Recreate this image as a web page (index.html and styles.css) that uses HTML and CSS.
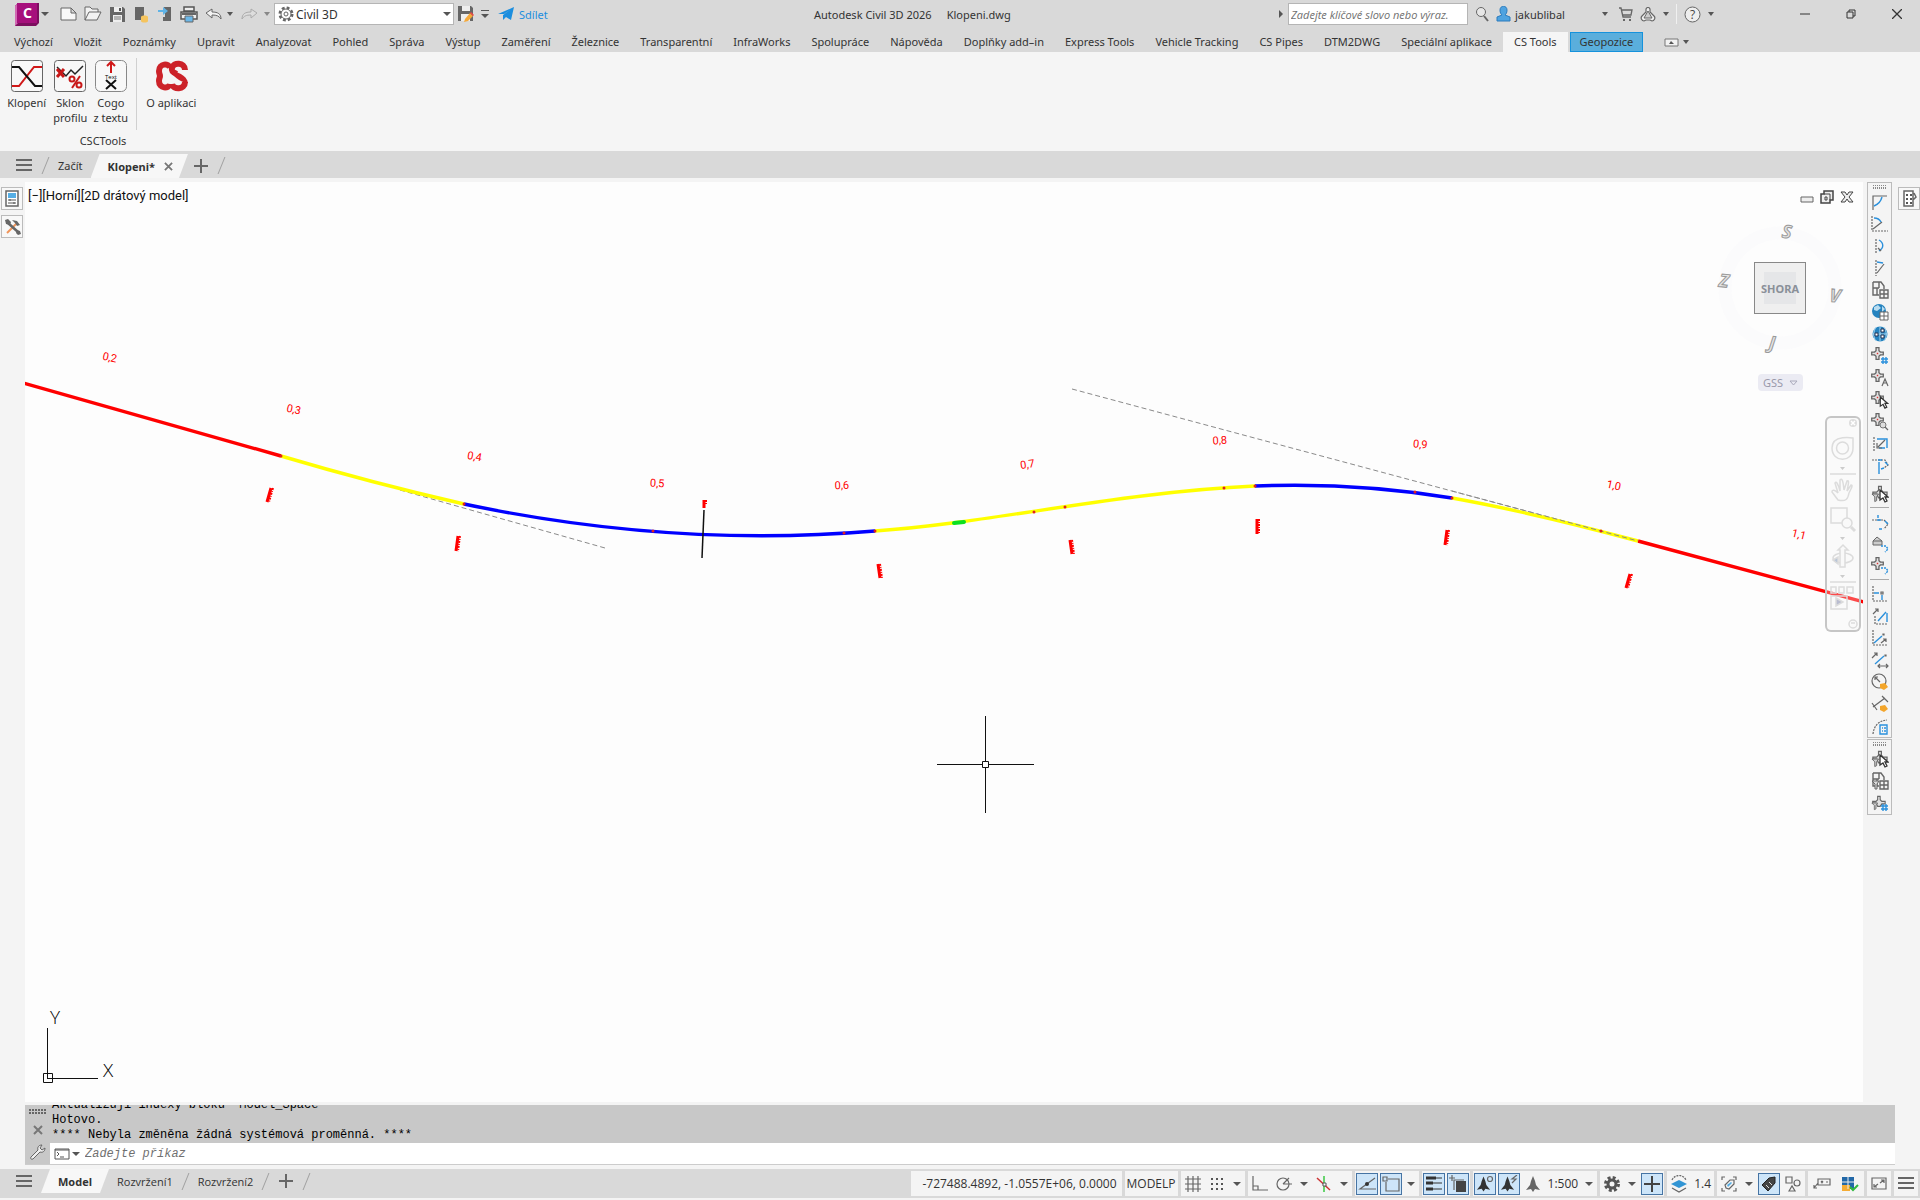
FILE: index.html
```
<!DOCTYPE html>
<html lang="cs">
<head>
    <meta charset="utf-8">
    <title>Autodesk Civil 3D 2026 - Klopeni.dwg</title>
    <link rel="stylesheet" href="styles.css">
</head>
<body>
    <!-- shared icons -->
    <svg class="defs" width="0" height="0">
        <symbol id="point" viewBox="0 0 18 18"><path d="M7 1h4v4l2 2h4v4h-4l-2 2v4H7v-4l-2-2H1V7h4l2-2z" fill="#e2e2e2" stroke="#666" stroke-width="1.8"/><path d="M8 8h2v2H8z" fill="#d33"/></symbol>
        <symbol id="cursor" viewBox="0 0 10 14"><path d="M1 1v10l3-2 2 4 2-1-2-4h3z" fill="#fff" stroke="#333" stroke-width="1.3"/></symbol>
        <symbol id="human" viewBox="0 0 16 18"><path d="M8 1l2 5 1 4 4 5-5-1-2 3-2-3-5 1 4-5 1-4z" fill="currentColor"/></symbol>
        <symbol id="filterpoint" viewBox="0 0 18 18"><path d="M8 1h3v4l2 2h4v3h-4l-2 3H8L6 9 2 9V7h4l2-2z" fill="#e2e2e2" stroke="#666" stroke-width="1.3"/><path d="M1 9h7l-2 3v4l-2 1v-5z" fill="#ccc" stroke="#666"/></symbol>
        <symbol id="sheet" viewBox="0 0 18 18"><path d="M2 1h8l3 4v3M2 1v13h6M2 7h6M8 1v6M6 7v7M9 9h8v8H9zM13 9v8M9 13h8" fill="none" stroke="#666" stroke-width="1.4"/></symbol>
        <symbol id="plus" viewBox="0 0 14 14"><path d="M7 0v14M0 7h14" stroke="#666" stroke-width="2"/></symbol>
        <symbol id="cross" viewBox="0 0 10 10"><path d="M1 1l8 8M9 1L1 9" stroke="#777" stroke-width="2"/></symbol>
        <symbol id="bars" viewBox="0 0 16 13"><path d="M0 1h16M0 6h16M0 11h16" stroke="#666" stroke-width="2"/></symbol>
    </svg>

    <header class="titlebar">
        <button class="app" aria-label="Nabídka aplikace"><svg width="24" height="23" viewBox="0 0 24 23"><path d="M3 0h21v20l-3 3H0V3z" fill="#7d0f5f"/><path d="M0 3l3-3v20l-3 3z" fill="#d169b3"/><path d="M2 0h20v20H2z" fill="#a6107c"/></svg><b>C</b></button>
        <i class="caret"></i>
        <div class="quick">
            <button aria-label="Nový"><svg width="18" height="16" viewBox="0 0 18 16"><path d="M1 2h10l5 5v7H1zM11 2v5h5" fill="#f8f8f8" stroke="#666"/></svg></button>
            <button aria-label="Otevřít"><svg width="18" height="16" viewBox="0 0 18 16"><path d="M1 14V1h5l2 2h6v3M1 14l4-8h12l-4 8z" fill="#f2f2f2" stroke="#666"/></svg></button>
            <button aria-label="Uložit"><svg width="17" height="17" viewBox="0 0 17 17"><path d="M1 1h13l2 2v13H1z" fill="#666"/><path d="M5 1h8v5H5zM4 9h9v7H4z" fill="#eee"/><path d="M10 2h2v3h-2z" fill="#555"/><path d="M5 11h7M5 13h7" stroke="#777"/></svg></button>
            <button aria-label="Stáhnout"><svg width="17" height="17" viewBox="0 0 17 17"><path d="M2 1h9v13H2z" fill="#666"/><path d="M8 11c0-2 7-2 7 0v4c0 2-7 2-7 0z" fill="#f5c45e"/></svg></button>
            <button aria-label="Odeslat"><svg width="17" height="17" viewBox="0 0 17 17"><path d="M7 1h7v14H6v-4h2V7z" fill="#666"/><path d="M1 4h5V1l5 4-5 4V6H1z" fill="#5fb3e6"/></svg></button>
            <button aria-label="Tisk"><svg width="18" height="17" viewBox="0 0 18 17"><path d="M4 1h10v4H4zM1 6h16v7H1z" fill="#eee" stroke="#555" stroke-width="1.5"/><path d="M2 7h14v2H2z" fill="#666"/><path d="M5 10h8v6H5z" fill="#6bb7e8" stroke="#666"/></svg></button>
            <button aria-label="Zpět"><svg width="17" height="12" viewBox="0 0 17 12"><path d="M1 5l6-4v3c6 0 9 2 9 7-2-3-4-4-9-4v3z" fill="#f2f2f2" stroke="#666"/></svg></button>
        </div>
        <i class="caret small undo"></i>
        <button class="redo" aria-label="Znovu"><svg width="17" height="12" viewBox="0 0 17 12"><path d="M16 5l-6-4v3C4 4 1 6 1 11c2-3 4-4 9-4v3z" fill="#ddd" stroke="#aaa"/></svg></button>
        <i class="caret small light"></i>
        <div class="workspace-pick">
            <svg width="16" height="16" viewBox="0 0 16 16"><circle cx="8" cy="8" r="6" fill="none" stroke="#666" stroke-width="3" stroke-dasharray="2.7 2"/><circle cx="8" cy="8" r="5" fill="#fff" stroke="#666"/><circle cx="8" cy="8" r="2" fill="none" stroke="#666"/></svg>
            <select aria-label="Pracovní prostor"><option>Civil 3D</option></select>
            <i class="caret"></i>
        </div>
        <button class="save-as" aria-label="Uložit prostor"><svg width="17" height="18" viewBox="0 0 17 18"><path d="M1 1h13l2 2v13H1z" fill="#666"/><path d="M5 1h8v5H5zM4 9h9v7H4z" fill="#eee"/><path d="M8 14l5-6 3 3-5 5-4 1z" fill="#f5a93a"/><path d="M13 8l3 3 1-1-3-3z" fill="#e44"/></svg></button>
        <button class="more" aria-label="Přizpůsobit panel"><i class="caret"></i></button>
        <a class="share" href="#"><svg width="17" height="14" viewBox="0 0 17 14"><path d="M0 7L16 0l-3 13-5-3-3 3V8l7-5-6 4z" fill="#1c8ede"/></svg>Sdílet</a>
        <div class="doc-title"><span>Autodesk Civil 3D 2026</span><span>Klopeni.dwg</span></div>
        <div class="account">
            <i class="arrow"></i>
            <input type="text" aria-label="Hledat" placeholder="Zadejte klíčové slovo nebo výraz.">
            <svg width="14" height="16" viewBox="0 0 14 16"><circle cx="6" cy="6" r="4.5" fill="#e6e6e6" stroke="#666"/><path d="M9 10l4 5" stroke="#666" stroke-width="2"/></svg>
            <svg class="person" width="15" height="16" viewBox="0 0 15 16"><path d="M4 4c0-5 7-5 7 0 0 3-1 4-2 5l5 2v4H1v-4l5-2C5 8 4 7 4 4z" fill="#4fa3e0" stroke="#2b7bbd"/></svg>
            <span class="user">jakublibal</span>
            <i class="caret small"></i>
            <svg class="cart" width="14" height="15" viewBox="0 0 14 15"><path d="M0 1h2l2 9h8M3 3h10l-1 5H4" fill="none" stroke="#666" stroke-width="1.3"/><path d="M4 12h2v2H4zM10 12h2v2h-2z" fill="#666"/></svg>
            <svg class="tri" width="16" height="15" viewBox="0 0 16 15"><path d="M6 2c1-2 3-2 4 0v3l4 4c2 2 0 5-2 5l-2-1H6l-2 1c-2 0-4-3-2-5l4-4z" fill="#eee" stroke="#666" stroke-width="1.2"/><path d="M8 4l-4 7h8z" fill="#ccc" stroke="#666"/></svg>
            <i class="caret small"></i>
            <span class="bar"></span>
            <svg width="17" height="17" viewBox="0 0 17 17"><circle cx="8.500" cy="8.500" r="7.500" fill="#eee" stroke="#666"/><text x="6" y="13" font-size="12" font-family="Open Sans" fill="#444">?</text></svg>
            <i class="caret small"></i>
        </div>
        <div class="window-buttons">
            <button aria-label="Minimalizovat"><svg width="10" height="10"><path d="M0 5h10" stroke="#333"/></svg></button>
            <button aria-label="Obnovit"><svg width="10" height="10" viewBox="0 0 10 10"><path d="M1 3h6v6H1zM3 3V1h6v6H7" fill="none" stroke="#333"/></svg></button>
            <button aria-label="Zavřít"><svg width="10" height="10"><path d="M0 0l10 10M10 0L0 10" stroke="#333" stroke-width="1.3"/></svg></button>
        </div>
    </header>

    <nav class="tabs">
        <a href="#">Výchozí</a><a href="#">Vložit</a><a href="#">Poznámky</a><a href="#">Upravit</a><a href="#">Analyzovat</a><a href="#">Pohled</a><a href="#">Správa</a><a href="#">Výstup</a><a href="#">Zaměření</a><a href="#">Železnice</a><a href="#">Transparentní</a><a href="#">InfraWorks</a><a href="#">Spolupráce</a><a href="#">Nápověda</a><a href="#">Doplňky add–in</a><a href="#">Express Tools</a><a href="#">Vehicle Tracking</a><a href="#">CS Pipes</a><a href="#">DTM2DWG</a><a href="#">Speciální aplikace</a><a class="active" href="#">CS Tools</a><a class="geo" href="#">Geopozice</a>
        <button aria-label="Sbalit pás"><svg width="15" height="9" viewBox="0 0 15 9"><path d="M1 1h13v7H1z" fill="#f2f2f2" stroke="#777"/><path d="M5 6l2-3 3 3z" fill="#555"/></svg></button>
        <i class="caret small"></i>
    </nav>

    <section class="ribbon">
        <div class="panel">
            <div class="tools">
                <button><svg width="32" height="32" viewBox="0 0 32 32"><rect x=".5" y=".5" width="31" height="31" rx="3" fill="#f8f8f8" stroke="#666"/><path d="M1 26h7L23 7h8" fill="none" stroke="#d01818" stroke-width="2"/><path d="M1 7h7l16 19h7" fill="none" stroke="#111" stroke-width="2"/></svg>Klopení</button>
                <button><svg width="32" height="32" viewBox="0 0 32 32"><rect x=".5" y=".5" width="31" height="31" rx="3" fill="#f8f8f8" stroke="#666"/><path d="M3 7l9 9 5-6 4 4 8-8" fill="none" stroke="#222" stroke-width="1.5"/><path d="M3 9l7 8M10 9l-7 8" stroke="#c81818" stroke-width="3"/><path d="M26 16l-8 12" stroke="#c81818" stroke-width="2"/><circle cx="18" cy="19" r="2.500" fill="none" stroke="#c81818" stroke-width="2"/><circle cx="25" cy="25" r="2.500" fill="none" stroke="#c81818" stroke-width="2"/></svg>Sklon<br>profilu</button>
                <button class="narrow"><svg width="32" height="32" viewBox="0 0 32 32"><rect x=".5" y=".5" width="31" height="31" rx="5" fill="#f8f8f8" stroke="#888"/><path d="M16 13V3M12 6l4-4 4 4" fill="none" stroke="#d01818" stroke-width="2"/><text x="10" y="19" font-size="6" font-family="Open Sans">Text</text><path d="M11 20l10 9M21 20l-10 9" stroke="#111" stroke-width="2"/></svg>Cogo<br>z textu</button>
                <span class="divider"></span>
                <button class="wide"><svg width="34" height="32" viewBox="0 0 34 32"><path d="M16 8C15 3 5 3 5 11c0 3 1 3 1 5s-1 2-1 5c0 8 10 8 11 3" fill="none" stroke="#cc2229" stroke-width="6"/><path d="M31 10c0-8-12-8-13-2-1 4 2 5 5 6M18 24c1 6 13 6 13-2" fill="none" stroke="#cc2229" stroke-width="6"/><path d="M16 11c6 0 17 4 18 12-5 0-13-4-18-12z" fill="#cc2229"/></svg>O aplikaci</button>
            </div>
            <div class="panel-name">CSCTools</div>
        </div>
    </section>

    <nav class="files">
        <button class="menu" aria-label="Nabídka"><svg width="16" height="13"><use href="#bars"/></svg></button>
        <i class="slash"></i>
        <a href="#">Začít</a>
        <a class="current" href="#">Klopeni* <svg width="9" height="9"><use href="#cross"/></svg></a>
        <button class="add" aria-label="Nový výkres"><svg width="14" height="14"><use href="#plus"/></svg></button>
        <i class="slash"></i>
    </nav>

    <main class="work">
        <aside class="left">
            <button aria-label="Vlastnosti"><svg width="14" height="17" viewBox="0 0 14 17"><path d="M1 1h12v15H1z" fill="#fff" stroke="#666" stroke-width="1.5"/><path d="M3 3h8v5H3z" fill="#55aee5"/><path d="M3 10h8M3 13h8M5 9v2M9 12v2" stroke="#555"/></svg></button>
            <button aria-label="Nástroje"><svg width="17" height="17" viewBox="0 0 17 17"><path d="M3 15L13 5" stroke="#f0955a" stroke-width="2"/><path d="M4 5l10 9" stroke="#666" stroke-width="2.5"/><path d="M1 2l1 4 4 1 1-3-3-3M8 2l5 1 3 4-3 1-2-3zM12 15l1-3 3 1 1 3-3 1z" fill="#666"/></svg></button>
        </aside>

        <div class="view">
            <svg class="drawing" viewBox="25 182 1838 920">
                <!-- tangents -->
                <path class="tangent" d="M400 490L605 548M1072 389L1638 541"/>
                <!-- alignment -->
                <g class="axis">
                    <path class="line" d="M20 382L281 456M1638 541L1868 603"/>
                    <path class="spiral" d="M281 456Q372 483 464 504M875 531C990 523 1120 492 1255 486M1452 498Q1530 512 1638 541"/>
                    <path class="arc" d="M464 504Q672 548 875 531M1255 486Q1355 482 1452 498"/>
                    <path class="green" d="M954 523L964 522"/>
                </g>
                <path class="tangent" d="M1452 491L1638 541"/>
                <g class="stations">
                    <circle cx="281" cy="456" r="1.500"/><circle cx="464" cy="504" r="1.500"/><circle cx="653" cy="531" r="1.500"/><circle cx="844" cy="533" r="1.500"/><circle cx="875" cy="531" r="1.500"/><circle cx="1034" cy="512" r="1.500"/><circle cx="1065" cy="507" r="1.500"/><circle cx="1224" cy="488" r="1.500"/><circle cx="1255" cy="486" r="1.500"/><circle cx="1415" cy="492" r="1.500"/><circle cx="1452" cy="498" r="1.500"/><circle cx="1601" cy="531" r="1.500"/>
                </g>
                <g class="km">
                    <text transform="translate(109 361) rotate(12)">0,2</text>
                    <text transform="translate(293 413) rotate(12)">0,3</text>
                    <text transform="translate(474 460) rotate(10)">0,4</text>
                    <text transform="translate(657 487) rotate(3)">0,5</text>
                    <text transform="translate(842 489) rotate(-2)">0,6</text>
                    <text transform="translate(1028 468) rotate(-8)">0,7</text>
                    <text transform="translate(1220 444) rotate(-3)">0,8</text>
                    <text transform="translate(1420 448) rotate(5)">0,9</text>
                    <text transform="translate(1613 489) rotate(12)">1,0</text>
                    <text transform="translate(1798 538) rotate(14)">1,1</text>
                </g>
                <!-- main point labels, too small to be read at this zoom -->
                <g class="marks">
                    <path d="M271 488L267 502M458 536L456 551M878 564L880 578M1070 540L1072 554M1257 519V534M1447 530L1445 545M1630 574L1626 588M704 500V508"/>
                    <path class="rough" d="M273 488L269 502M460 536L458 551M880 564L882 578M1072 540L1074 554M1259 519V534M1449 530L1447 545M1632 574L1628 588M706 500V504"/>
                </g>
                <path d="M704 510L702 558" stroke="#111" stroke-width="1.5"/>
                <!-- cursor -->
                <path class="thin" d="M985.500 716v45M985.500 768v45M937 764.500h45M989 764.500h45M982.500 761.500h6v6h-6z"/>
                <!-- ucs icon -->
                <path class="thin" d="M47.500 1028v45M52 1078.500h46M43.500 1073.500h9v9h-9zM47 1078.500h5M47.500 1073v5"/>
                <g class="ucs"><text x="55" y="1024">Y</text><text x="108" y="1077">X</text></g>
            </svg>
            <div class="view-label">[−][Horní][2D drátový model]</div>
            <div class="view-buttons">
                <button aria-label="Minimalizovat"><svg width="14" height="14"><path d="M1 7h12v5H1z" fill="#eee" stroke="#666"/></svg></button>
                <button aria-label="Obnovit"><svg width="14" height="14"><path d="M4 1h9v9h-3v3H1V4h3z" fill="#eee" stroke="#444" stroke-width="1.5"/><path d="M4 4h6v6M5 7h2v3H5z" fill="none" stroke="#444"/></svg></button>
                <button aria-label="Zavřít"><svg width="14" height="14"><path d="M1 2h4l2 3 2-3h4L9 7l4 5H9L7 9l-2 3H1l4-5z" fill="#eee" stroke="#444"/></svg></button>
            </div>
            <div class="compass">
                <svg width="140" height="140" viewBox="0 0 140 140"><circle cx="70" cy="70" r="55" fill="none" stroke="#fbfbfc" stroke-width="13"/>
                    <g class="dirs"><text x="77" y="20" transform="rotate(6 77 14)">S</text><text x="14" y="69" transform="rotate(6 14 63)">Z</text><text x="125" y="84" transform="rotate(6 125 78)">V</text><text x="62" y="131" transform="rotate(6 62 126)">J</text></g></svg>
                <button class="cube">SHORA</button>
            </div>
            <button class="ucs-name">GSS <svg width="9" height="6"><path d="M1 1h7L4.500 5z" fill="none" stroke="#aab"/></svg></button>
            <div class="navbar">
                <svg width="36" height="216" viewBox="0 0 36 216" fill="none" stroke="#dcdcdc" stroke-width="1.5">
                    <circle cx="28" cy="7" r="4" fill="#ddd" stroke="none"/><path d="M26 5l4 4M30 5l-4 4" stroke="#fff"/>
                    <path d="M7 32c0-14 21-10 21-10v10c0 15-21 15-21 0z"/><circle cx="17.500" cy="32" r="6"/>
                    <path d="M15 51h5l-2.500 3zM15 121h5l-2.500 3zM15 159h5l-2.500 3z" fill="#ccc" stroke="none"/><path d="M5 58h26M5 166h26"/>
                    <path d="M13 84l-6-8c0-3 3-2 6 1l-3-10c1-2 3 0 5 8V64c2-2 3 0 4 10l3-9c2-1 2 1 0 10l4-6c2 0 1 2-2 8-1 6-3 9-11 7z"/>
                    <path d="M6 92h16v15H6z"/><circle cx="22" cy="107" r="5" fill="#f9f9f9"/><path d="M26 111l4 4" stroke-width="3"/>
                    <ellipse cx="18" cy="142" rx="10" ry="5"/><path d="M15 151v-17h-2l5-5 5 5h-3v17z" fill="#f9f9f9"/><path d="M8 144l5-3v7z" fill="#b9c6d8"/>
                    <path d="M6 171h5v6H6zM14 171h5v6h-5zM22 171h6v6h-6zM6 180h16v13H6z"/><path d="M11 182l7 4-7 4z" fill="#b9bcd0"/>
                    <circle cx="28" cy="208" r="4"/><path d="M26 207h4"/>
                </svg>
            </div>
        </div>

        <aside class="right">
            <div class="toolbars">
                <div class="toolbar">
                    <i class="grip"></i>
                    <button><svg width="18" height="18" viewBox="0 0 18 18"><path d="M2 17V3h14" class="g"/><path d="M3 13c5-2 7-5 8-9" class="b"/></svg></button>
                    <button><svg width="18" height="18" viewBox="0 0 18 18"><path d="M1 1v15h16" class="g dash"/><path d="M2 14L11 7" class="g"/><path d="M3 3c4 0 6 2 7 4" class="b"/></svg></button>
                    <button><svg width="18" height="18" viewBox="0 0 18 18"><path d="M5 2v14" class="g dash"/><path d="M8 3c5 3 5 8 0 11" class="b"/><path d="M7 11l3 3" class="g"/></svg></button>
                    <button><svg width="18" height="18" viewBox="0 0 18 18"><path d="M5 1v16" class="g dash"/><path d="M6 14l7-9" class="g"/><path d="M6 3l6 1" class="b"/></svg></button>
                    <button><svg width="18" height="18"><use href="#sheet"/></svg></button>
                    <button><svg width="18" height="18" viewBox="0 0 18 18"><circle cx="8" cy="8" r="7" fill="#2583bf"/><path d="M3 4l4-2 3 3-4 3-3-1M11 3l3 3-3 3" fill="#b8dcf0"/><path d="M9 9h8v8H9zM13 9v8M9 13h8" fill="#fff" stroke="#666"/></svg></button>
                    <button><svg width="18" height="18" viewBox="0 0 18 18"><circle cx="9" cy="9" r="7.500" fill="#2583bf"/><path d="M1 9h16M9 1v16M5 2c-3 5-3 10 0 14M13 2c3 5 3 10 0 14" fill="none" stroke="#a9d5ef"/><path d="M10 4h3v3h-3zM4 8h3v3H4zM10 10h3v3h-3z" fill="#fff" stroke="#235"/></svg></button>
                    <button><svg width="18" height="18" viewBox="0 0 18 18"><use href="#point" width="13" height="13"/><path d="M12 10v7M15 10v7M10 12h7M10 15h7" class="b"/></svg></button>
                    <button><svg width="18" height="18" viewBox="0 0 18 18"><use href="#point" width="13" height="13"/><path d="M11 17l3-7 3 7M12 14h4" class="g"/></svg></button>
                    <button><svg width="18" height="18" viewBox="0 0 18 18"><use href="#point" width="13" height="13"/><use href="#cursor" x="8" y="5" width="10" height="13"/></svg></button>
                    <button><svg width="18" height="18" viewBox="0 0 18 18"><use href="#point" width="13" height="13"/><circle cx="12" cy="12" r="3" fill="#ddd" stroke="#777"/><path d="M14 14l3 3" class="g"/></svg></button>
                    <button><svg width="18" height="18" viewBox="0 0 18 18"><path d="M3 2v15" class="g dash"/><path d="M6 4h10v9M8 13h6" class="b"/><path d="M14 5l-7 7M6 8v5h5" class="g"/></svg></button>
                    <button><svg width="18" height="18" viewBox="0 0 18 18"><path d="M1 3h13l3 5-4 3" class="g dash"/><path d="M7 3h4M8 5v12M14 5l3 3M10 12l3-1" class="b"/></svg></button>
                    <hr>
                    <button><svg width="18" height="18" viewBox="0 0 18 18"><use href="#filterpoint" width="17" height="18"/><use href="#cursor" x="8" y="4" width="10" height="14"/></svg></button>
                    <hr>
                    <button><svg width="18" height="18" viewBox="0 0 18 18"><path d="M1 7h12l4 4-4 5" class="g dash"/><path d="M7 2v3M6 7h4M14 8l3 3M8 16h3" class="b"/></svg></button>
                    <button><svg width="18" height="18" viewBox="0 0 18 18"><path d="M2 6l4-4 5 4v4H2zM2 6h9" fill="#ccc" stroke="#666"/><path d="M10 11h5l2 3-3 3" class="b dash"/></svg></button>
                    <button><svg width="18" height="18" viewBox="0 0 18 18"><use href="#point" width="13" height="13"/><path d="M10 11h5l2 3-3 3" class="b dash"/></svg></button>
                    <hr>
                    <button><svg width="18" height="18" viewBox="0 0 18 18"><path d="M2 1v15h15" class="g dash"/><path d="M3 8h5M11 10v5" class="b"/><path d="M10 7h2v2h-2z" class="g"/></svg></button>
                    <button><svg width="18" height="18" viewBox="0 0 18 18"><path d="M4 9v8h12" class="g dash"/><path d="M7 14l8-9M16 6v9" class="b"/><path d="M2 7l5-5M4 2h3v3" class="g"/></svg></button>
                    <button><svg width="18" height="18" viewBox="0 0 18 18"><path d="M2 1v15h15" class="g dash"/><path d="M3 14l8-7" class="b"/><path d="M10 14l5-4M12 10h3v3M12 5h1v1h-1z" class="g"/></svg></button>
                    <button><svg width="18" height="18" viewBox="0 0 18 18"><path d="M4 13L13 5" class="b"/><path d="M1 7l5-5M3 2h3v3M7 15h10M9 13l-2 2 2 2M15 13l2 2-2 2M14 4h1v1h-1z" class="g"/></svg></button>
                    <button><svg width="18" height="18" viewBox="0 0 18 18"><circle cx="8" cy="8" r="7" class="g"/><path d="M9 9L4 4M4 7V4h3" class="g"/><path d="M9 11l5-1 3 4-4 3-4-2z" fill="#f3a52a"/></svg></button>
                    <button><svg width="18" height="18" viewBox="0 0 18 18"><path d="M2 12L14 3M1 8l5 7M11 1l6 6" class="g"/><path d="M9 11l5-1 3 4-4 3-4-2z" fill="#f3a52a"/></svg></button>
                    <button><svg width="18" height="18" viewBox="0 0 18 18"><path d="M2 17C3 9 7 4 16 3" class="g dash"/><path d="M9 8h7v9H9zM11 11h1M13 11h2M11 14h1M13 14h2" class="b"/></svg></button>
                </div>
                <div class="toolbar">
                    <i class="grip"></i>
                    <button><svg width="18" height="18" viewBox="0 0 18 18"><use href="#filterpoint" width="17" height="18"/><use href="#cursor" x="8" y="4" width="10" height="14"/></svg></button>
                    <button><svg width="18" height="18" viewBox="0 0 18 18"><use href="#sheet" width="18" height="18"/><path d="M1 9h7l-2 3v5H4v-5z" fill="#ddd" stroke="#666"/></svg></button>
                    <button><svg width="18" height="18" viewBox="0 0 18 18"><use href="#filterpoint" width="15" height="18"/><path d="M12 10v7M15 10v7M10 12h7M10 15h7" class="b"/></svg></button>
                </div>
            </div>
            <button class="palette" aria-label="Paleta"><svg width="15" height="17" viewBox="0 0 15 17"><path d="M2 1h9v15H2zM12 3l2 4-3 3" fill="#fff" stroke="#666" stroke-width="1.5"/><path d="M4 5h2M8 5h2M4 9h2M8 9h2M4 13h2M8 13h2" stroke="#555" stroke-width="2"/></svg></button>
        </aside>
    </main>

    <section class="command">
        <div class="command-side">
            <i class="grip"></i>
            <button aria-label="Zavřít"><svg width="10" height="10"><use href="#cross"/></svg></button>
            <button aria-label="Přizpůsobit"><svg width="16" height="16" viewBox="0 0 16 16"><path d="M1 13l7-7c-1-3 1-5 4-5l-2 3 2 2 3-2c0 3-2 5-5 4l-7 7c-2 1-3-1-2-2z" fill="#eee" stroke="#666"/></svg></button>
        </div>
        <div class="command-body">
            <pre class="history">Aktualizuji indexy bloku *Model_Space
Hotovo.
**** Nebyla změněna žádná systémová proměnná. ****</pre>
            <label class="prompt">
                <svg width="16" height="12" viewBox="0 0 16 12"><path d="M1 1h14v10H1z" fill="#fff" stroke="#555"/><path d="M1 2h14" stroke="#555"/><path d="M3 4l2 2-2 2M6 9h4" fill="none" stroke="#555"/></svg>
                <i class="caret"></i>
                <input type="text" placeholder="Zadejte příkaz" aria-label="Příkaz">
            </label>
        </div>
    </section>

    <footer class="bottom">
        <nav class="layouts">
            <button class="menu" aria-label="Rozvržení"><svg width="16" height="13"><use href="#bars"/></svg></button>
            <a class="current" href="#">Model</a>
            <a href="#">Rozvržení1</a><i class="slash"></i>
            <a href="#">Rozvržení2</a><i class="slash"></i>
            <button class="add" aria-label="Nové rozvržení"><svg width="14" height="14"><use href="#plus"/></svg></button><i class="slash"></i>
        </nav>
        <div class="status">
            <div class="coords">-727488.4892, -1.0557E+06, 0.0000</div>
            <div class="space">MODELP</div>
            <div>
                <button><svg width="16" height="16"><path d="M3 0v16M8 0v16M13 0v16M0 3h16M0 8h16M0 13h16" class="g"/></svg></button>
                <button><svg width="16" height="16"><path d="M2 3h14M2 8h14M2 13h14" stroke="#555" stroke-width="2" stroke-dasharray="2 3"/></svg></button>
                <i class="caret"></i>
            </div>
            <div>
                <button><svg width="16" height="16"><path d="M1 0v14h15M1 10h5v4" class="g"/></svg></button>
                <button><svg width="16" height="16"><circle cx="7" cy="8" r="6" class="g"/><path d="M7 8h9M7 8l6-6" class="g"/></svg></button>
                <i class="caret"></i>
                <button><svg width="16" height="16"><path d="M8 0v16" stroke="#3bc943" stroke-width="1.5"/><path d="M1 2l13 12" stroke="#c33" stroke-width="1.5"/><path d="M7 7h3v3H7z" fill="#fff" stroke="#555"/></svg></button>
                <i class="caret"></i>
            </div>
            <div>
                <button class="on"><svg width="18" height="18"><path d="M17 3L2 14h16" class="g"/><circle cx="9" cy="9" r="2" fill="#333"/></svg></button>
                <button class="on"><svg width="18" height="18"><path d="M6 4h11v12H4V7" class="g"/><path d="M1 2h4v4H1z" class="g"/></svg></button>
                <i class="caret"></i>
            </div>
            <div>
                <button class="on"><svg width="18" height="18"><path d="M1 3h10M1 8h7M1 14h7" stroke="#333" stroke-width="3"/><path d="M11 3h6M8 8h9M8 14h9" stroke="#333"/></svg></button>
                <button class="on"><svg width="18" height="18"><path d="M7 6h10v11H7z" fill="#444"/><path d="M5 15V5h10M3 0v6M0 3h6" class="g"/></svg></button>
            </div>
            <div>
                <button class="on"><svg width="18" height="18"><use href="#human" width="15" height="18"/><circle cx="14" cy="4" r="2.500" class="g"/></svg></button>
                <button class="on"><svg width="18" height="18"><use href="#human" width="15" height="18"/><path d="M17 0l-5 4h4l-4 4" class="g"/></svg></button>
                <button class="off"><svg width="16" height="18"><use href="#human" width="16" height="18"/></svg></button>
                <span class="scale">1:500</span>
                <i class="caret"></i>
            </div>
            <div>
                <button><svg width="16" height="16" viewBox="0 0 16 16"><circle cx="8" cy="8" r="6" fill="none" stroke="#555" stroke-width="4" stroke-dasharray="2.7 2"/><circle cx="8" cy="8" r="4" fill="none" stroke="#555" stroke-width="3"/></svg></button>
                <i class="caret"></i>
                <button class="on"><svg width="18" height="18"><path d="M9 1v16M1 9h16" stroke="#444" stroke-width="2"/></svg></button>
            </div>
            <div>
                <button><svg width="16" height="18"><path d="M1 5c3-6 11-6 14 0" class="g dash"/><path d="M1 13l7 4 7-4" class="g"/><path d="M0 9l8-4 8 4-8 4z" fill="#3295d4"/></svg></button>
                <span class="lod">1.4</span>
            </div>
            <div>
                <button><svg width="16" height="16"><path d="M1 4V1h3M12 1h3v3M15 12v3h-3M4 15H1v-3M5 12l-1-3 5-5h4v4l-5 5z" class="g"/><path d="M6 9l4-3 1 1-4 4z" fill="#55aee5"/></svg></button>
                <i class="caret"></i>
                <button class="on"><svg width="18" height="18"><path d="M2 10l7-7 6-1v6l-7 8z" fill="#444" stroke="#222"/><path d="M6 10l3 3M9 7l3 3" stroke="#ddd"/></svg></button>
                <button><svg width="16" height="16"><path d="M1 1h6v6H1zM4 15l3-5 3 5z" class="g"/><circle cx="12" cy="7" r="3" class="g"/></svg></button>
            </div>
            <div>
                <button class="roomy"><svg width="18" height="16"><path d="M5 3h12v6H5zM5 7l-4 5M1 9v3h3M8 5l2 2M10 5L8 7M13 6h2" class="g"/></svg></button>
                <button class="roomy"><svg width="18" height="16"><path d="M1 1h12v12H1z" fill="#2268a8"/><path d="M1 9h8v6H1z" fill="#f5ac35"/><path d="M1 6h12M7 1v12" stroke="#eee"/><path d="M9 11l3 3 5-5" fill="none" stroke="#32b83e" stroke-width="2"/></svg></button>
            </div>
            <div><button><svg width="16" height="13"><path d="M1 1h14v11H1zM9 6l4-3M10 3h3v3M7 7l-4 3M3 7v3h3" class="g"/></svg></button></div>
            <div><button><svg width="16" height="13"><use href="#bars"/></svg></button></div>
        </div>
    </footer>
</body>
</html>
```
FILE: styles.css
```
* {
    box-sizing: border-box;
}

body {
    margin: 0;
    min-height: 100vh;
    display: flex;
    flex-direction: column;
    font-family: "Noto Sans", "Open Sans", sans-serif;
    font-size: 11px;
    color: #333;
    background-color: #f4f4f4;
    overflow: hidden;
}

button {
    display: inline-flex;
    align-items: center;
    justify-content: center;
    padding: 0;
    border: none;
    background: none;
    font: inherit;
    color: inherit;
}

a {
    color: inherit;
    text-decoration: none;
}

svg {
    display: block;
    flex-shrink: 0;
}

.defs {
    position: absolute;
}

.g {
    fill: none;
    stroke: #666;
    stroke-width: 1.2;
}

.b {
    fill: none;
    stroke: #2a90dc;
    stroke-width: 1.4;
}

.dash {
    stroke-dasharray: 2 1;
}

.caret {
    flex-shrink: 0;
    width: 0;
    height: 0;
    border: 4px solid transparent;
    border-top-color: #555;
    border-bottom-width: 0;
}

.caret.small {
    border-width: 4px 3px 0;
}

.caret.light {
    border-top-color: #888;
}

/* title bar */
.titlebar {
    display: flex;
    align-items: center;
    height: 32px;
    padding: 0 12px 4px 15px;
    background-color: #d9d9d9;
}

.app {
    position: relative;
    margin-right: 2px;
}

.app b {
    position: absolute;
    left: 8px;
    top: 0;
    font-size: 14px;
    line-height: 19px;
    color: #fff;
}

.quick {
    display: flex;
    margin-left: 8px;
}

.quick button {
    width: 24px;
    height: 24px;
}

.undo {
    margin: 0 8px 0 2px;
}

.redo {
    margin-right: 6px;
}

.workspace-pick {
    display: flex;
    align-items: center;
    flex: 0 0 180px;
    height: 22px;
    margin-left: 4px;
    padding: 0 2px 0 3px;
    background-color: #fff;
    border: 1px solid #b5b5b5;
}

.workspace-pick select {
    flex: 1;
    margin-left: 2px;
    border: none;
    appearance: none;
    background: none;
    font: inherit;
    font-size: 12px;
    color: #333;
}

.save-as {
    margin-left: 3px;
}

.more {
    height: 8px;
    margin: 0 9px 0 7px;
    align-items: flex-end;
    border-top: 1px solid #555;
}

.share {
    display: flex;
    align-items: center;
    gap: 4px;
    color: #1c8ede;
}

.doc-title {
    flex: 1;
    display: flex;
    justify-content: center;
    gap: 15px;
    padding-right: 2px;
}

.account {
    display: flex;
    align-items: center;
    gap: 7px;
}

.arrow {
    border: 4px solid transparent;
    border-left-color: #555;
    border-right-width: 0;
}

.account input {
    width: 180px;
    height: 22px;
    padding: 0 2px;
    border: 1px solid #b5b5b5;
    background-color: #fff;
    font-family: "Open Sans", sans-serif;
    font-size: 11px;
    font-style: italic;
}

.account input::placeholder,
.prompt input::placeholder {
    color: #707070;
    opacity: 1;
}

.account .arrow {
    margin-right: -2px;
}

.user {
    width: 80px;
    margin-left: -3px;
}

.cart {
    margin-left: 4px;
}

.bar {
    width: 1px;
    height: 20px;
    background-color: #f0f0f0;
}

.window-buttons {
    display: flex;
    margin-left: 68px;
}

.window-buttons button {
    width: 46px;
    height: 24px;
}

.window-buttons button:last-child {
    width: 22px;
    margin-left: 12px;
}

/* ribbon tabs */
.tabs {
    display: flex;
    align-items: center;
    height: 20px;
    padding-left: 4px;
    background-color: #d9d9d9;
}

.tabs a {
    padding: 0 11px 0 10px;
    line-height: 20px;
    white-space: nowrap;
}

.tabs .active {
    padding: 0 11px;
    background-color: #f5f5f5;
}

.tabs .geo {
    margin-left: 2px;
    padding: 0 9px;
    line-height: 18px;
    background-color: #5aaedc;
    border: 1px solid #1592dc;
}

.tabs button {
    margin: 0 4px 0 21px;
}

.ribbon {
    height: 99px;
    padding: 6px 5px 0;
    background-color: #f5f5f5;
}

.panel {
    width: 196px;
}

.tools {
    display: flex;
    height: 73px;
}

.tools button {
    flex-direction: column;
    justify-content: flex-start;
    width: 44px;
    padding-top: 2px;
    line-height: 15px;
}

.tools button svg {
    margin-bottom: 3px;
}

.tools .narrow {
    width: 38px;
}

.tools .wide {
    width: 60px;
}

.divider {
    width: 1px;
    height: 72px;
    margin: 0 5px 0 6px;
    background-color: #d0d0d0;
}

.panel-name {
    line-height: 20px;
    text-align: center;
}

/* drawing and layout tabs */
.files,
.layouts {
    display: flex;
    align-items: center;
    background-color: #d9d9d9;
}

.files {
    height: 27px;
    padding: 2px 0 0 16px;
}

.files a {
    padding: 0 8px;
}

.slash {
    width: 1px;
    height: 17px;
    margin: 0 4px;
    background-color: #a0a0a0;
    transform: skewX(-22deg);
}

.menu {
    margin-right: 9px;
}

.files .current,
.layouts .current {
    display: flex;
    align-items: center;
    gap: 9px;
    height: 24px;
    padding: 0 17px;
    background-color: #f7f7f7;
    font-weight: bold;
    clip-path: polygon(9px 0, 100% 0, calc(100% - 9px) 100%, 0 100%);
}

.files .current {
    align-self: flex-end;
    padding: 0 15px 0 17px;
}

.add {
    margin: 0 9px;
}

.files .add {
    margin-left: 6px;
}

/* work area */
.work {
    flex: 1;
    display: flex;
    padding-top: 4px;
}

.left {
    width: 25px;
    padding: 5px 1px;
}

.left button,
.palette {
    width: 22px;
    height: 23px;
    margin-bottom: 5px;
    border: 1px solid #bbb;
    background-color: #f8f8f8;
}

.view {
    position: relative;
    flex: 1;
    background-color: #fdfdfd;
}

.drawing {
    position: absolute;
    width: 100%;
    height: 100%;
}

.axis path {
    fill: none;
    stroke-width: 3.4;
}

.axis .line {
    stroke: #f00;
}

.axis .spiral {
    stroke: #ff0;
}

.axis .arc {
    stroke: #00f;
}

.axis .green {
    stroke: #0be020;
    stroke-width: 4;
    stroke-linecap: round;
}

.tangent {
    fill: none;
    stroke: #8a8a8a;
    stroke-dasharray: 5 3;
}

.stations circle {
    fill: #e02020;
}

.km text {
    font-family: Roboto, sans-serif;
    font-size: 11px;
    text-anchor: middle;
    fill: #f00;
}

.marks path {
    stroke: #f00;
    stroke-width: 3;
}

.marks .rough {
    stroke-width: 2;
    stroke-dasharray: 2 1 1 1;
}

.thin {
    fill: none;
    stroke: #111;
}

.ucs text {
    font-family: "Open Sans", sans-serif;
    font-size: 19px;
    font-weight: 300;
    text-anchor: middle;
}

.view-label {
    position: absolute;
    left: 3px;
    top: 6px;
    line-height: 16px;
    font-family: Roboto, sans-serif;
    font-size: 13px;
    color: #111;
}

.view-buttons {
    position: absolute;
    right: 9px;
    top: 8px;
    display: flex;
    gap: 6px;
}

.compass {
    position: absolute;
    right: 13px;
    top: 36px;
}

.dirs text {
    font-size: 18px;
    font-weight: bold;
    font-style: italic;
    text-anchor: middle;
    fill: #e4e4e4;
    stroke: #999;
    stroke-width: 1;
}

.cube {
    position: absolute;
    left: 44px;
    top: 44px;
    width: 52px;
    height: 52px;
    border: 1px solid #888;
    background: linear-gradient(#e5e6e8, #e5e6e8) center / 32px 32px no-repeat #efefef;
    font-size: 11px;
    font-weight: bold;
    color: #8a9099;
}

.ucs-name {
    position: absolute;
    right: 60px;
    top: 192px;
    width: 45px;
    height: 17px;
    gap: 6px;
    border-radius: 4px;
    background-color: #ebebf3;
    color: #99a;
}

.navbar {
    position: absolute;
    right: 2px;
    top: 234px;
    width: 36px;
    height: 216px;
    border-radius: 6px;
    background-color: rgba(245, 245, 245, .3);
    box-shadow: inset 0 0 0 2px #c6c6c6;
}

.right {
    display: flex;
    align-items: flex-start;
    width: 57px;
    padding-left: 4px;
}

.toolbars {
    width: 25px;
    margin-right: 6px;
}

.toolbar {
    display: flex;
    flex-direction: column;
    align-items: center;
    margin-bottom: 1px;
    border: 1px solid #bbb;
}

.toolbar button {
    width: 22px;
    height: 22px;
}

.toolbar hr {
    width: 19px;
    margin: 2px 0 3px;
    border: none;
    border-top: 1px solid #aaa;
}

.grip {
    width: 14px;
    height: 4px;
    margin: 2px 0;
    background: linear-gradient(transparent 1px, #f4f4f4 1px, #f4f4f4 2px, transparent 2px),
        repeating-linear-gradient(90deg, #888 0, #888 1px, transparent 1px, transparent 2px);
}

.palette {
    margin-top: 5px;
}

/* command line */
.command {
    display: flex;
    height: 60px;
    margin: 3px 25px 4px;
    border-bottom: 1px solid #ccc;
    background-color: #c8c8c8;
}

.command-side {
    display: flex;
    flex-direction: column;
    align-items: center;
    justify-content: space-between;
    width: 25px;
    padding: 2px 0 4px;
}

.command-side .grip {
    width: 17px;
    height: 5px;
    background: linear-gradient(transparent 2px, #c8c8c8 2px, #c8c8c8 3px, transparent 3px),
        repeating-linear-gradient(90deg, #666 0, #666 2px, transparent 2px, transparent 3px);
}

.command-body {
    flex: 1;
    display: flex;
    flex-direction: column;
}

.history {
    display: flex;
    flex-direction: column;
    justify-content: flex-end;
    height: 38px;
    margin: 0;
    padding: 0 0 0 2px;
    overflow: hidden;
    font-family: "Liberation Mono", monospace;
    font-size: 12px;
    line-height: 15px;
    color: #000;
}

.prompt {
    flex: 1;
    display: flex;
    align-items: center;
    padding-left: 4px;
    background-color: #fff;
}

.prompt .caret {
    margin: 0 5px 0 2px;
}

.prompt input {
    flex: 1;
    border: none;
    padding: 0;
    font-family: "Liberation Mono", monospace;
    font-size: 12px;
    font-style: italic;
}

/* bottom bar */
.bottom {
    display: flex;
    justify-content: space-between;
    height: 31px;
    border-bottom: 2px solid #f4f4f4;
    background-color: #d9d9d9;
}

.layouts {
    height: 24px;
    padding-left: 16px;
    font-family: "Open Sans", sans-serif;
}

.layouts a {
    padding: 0 8px;
}

.status {
    display: flex;
    gap: 3px;
    padding: 2px 2px 2px 0;
    font-family: "Open Sans", sans-serif;
}

.status > div {
    display: flex;
    align-items: center;
    gap: 2px;
    padding: 0 1px;
    background-color: #f4f4f4;
}

.status button {
    width: 22px;
    height: 22px;
}

.status .roomy {
    width: 26px;
}

.status .on {
    border: 1px solid #4674a4;
    background-color: #cde5f9;
}

.status .off {
    color: #666;
}

.status .caret {
    margin: 0 3px;
}

.status .coords {
    padding: 0 5px 0 11px;
    font-size: 12px;
}

.status .space,
.status .scale,
.status .lod {
    padding: 0 2px;
    font-size: 12px;
}
```
